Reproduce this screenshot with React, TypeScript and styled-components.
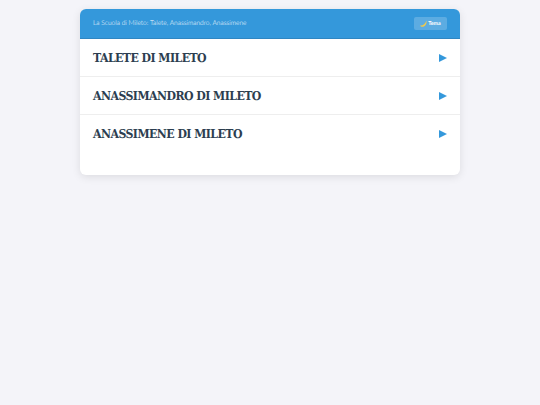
import styled, { createGlobalStyle } from "styled-components";

const GlobalStyle = createGlobalStyle`
  body {
    margin: 0;
    background: #f4f4f9;
    font-family: "Lato", "Liberation Sans", sans-serif;
    text-rendering: geometricPrecision;
  }
`;

const philosophers = [
  "TALETE DI MILETO",
  "ANASSIMANDRO DI MILETO",
  "ANASSIMENE DI MILETO",
];

const App = () => {
  return (
    <>
      <GlobalStyle />
      <Page>
        <Card>
          <Header>
            <Title>La Scuola di Mileto: Talete, Anassimandro, Anassimene</Title>
            <ThemeButton>
              <svg width="7" height="7" viewBox="0 0 8 8">
                <path d="M7.400 .6C8 4.200 6 7.800 2.600 7.800 1.400 7.800.5 7.200 0 6.200c2.800.6 5.800-1 7.400-5.600z" fill="#f0c94a" />
              </svg>
              <ThemeLabel>Tema</ThemeLabel>
            </ThemeButton>
          </Header>
          <List>
            {philosophers.map((name) => (
              <Row key={name}>
                <Name>{name}</Name>
                <Arrow viewBox="0 0 8 8">
                  <polygon points="0,0 8,4 0,8" fill="#3498db" />
                </Arrow>
              </Row>
            ))}
          </List>
        </Card>
      </Page>
    </>
  );
};

const Page = styled.div`
  display: flex;
  justify-content: center;
  padding-top: 9px;
  min-height: 396px;
`;

const Card = styled.div`
  width: 380px;
  height: 166px;
  background: #fff;
  border-radius: 6px;
  overflow: hidden;
  box-shadow: 0 2px 8px rgba(0, 0, 0, 0.1);
`;

const Header = styled.div`
  display: flex;
  justify-content: space-between;
  align-items: center;
  box-sizing: border-box;
  height: 30px;
  padding: 0 13px;
  background: #3498db;
  border-bottom: 1px solid #2f86c2;
`;

const Title = styled.div`
  padding-bottom: 2px;
  font-size: 6.6px;
  font-weight: 300;
  color: #fff;
`;

const ThemeButton = styled.div`
  display: flex;
  align-items: center;
  justify-content: center;
  gap: 1px;
  width: 33px;
  height: 13px;
  border-radius: 2px;
  background: rgba(255, 255, 255, 0.2);
`;

const ThemeLabel = styled.span`
  padding-top: 1px;
  font-size: 5.4px;
  font-weight: 700;
  color: #fff;
`;

const List = styled.div`
  display: flex;
  flex-direction: column;
`;

const Row = styled.div`
  display: flex;
  justify-content: space-between;
  align-items: center;
  box-sizing: border-box;
  height: 38px;
  padding: 0 13px;
  border-bottom: 1px solid #eeeeee;

  &:last-child {
    border-bottom-color: transparent;
  }
`;

const Name = styled.div`
  font-family: "DejaVu Serif", "Liberation Serif", serif;
  font-stretch: condensed;
  font-size: 12.2px;
  letter-spacing: -0.55px;
  font-weight: 700;
  color: #2c3e50;
`;

const Arrow = styled.svg`
  width: 8px;
  height: 8px;
  margin-top: 1px;
`;

export default App;
